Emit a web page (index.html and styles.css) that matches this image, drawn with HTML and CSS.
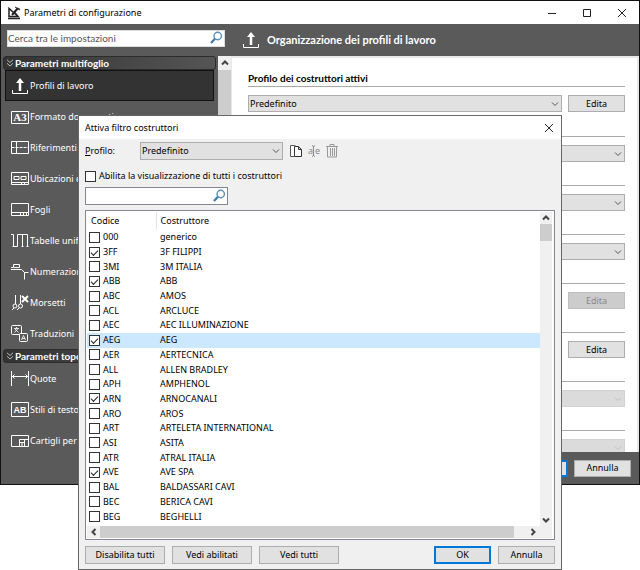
FILE: index.html
```
<!DOCTYPE html>
<html lang="it">

<head>
    <meta charset="utf-8">
    <meta name="viewport" content="width=device-width">
    <title>Parametri di configurazione</title>
    <link rel="stylesheet" href="styles.css">
</head>

<body>
    <svg class="defs" width="0" height="0">
        <symbol id="i-chevron" viewBox="0 0 8 8"><path d="M1 2.5l3 3 3-3" /></symbol>
        <symbol id="i-double" viewBox="0 0 8 8"><path d="M1 .8l3 2.7L7 .8M1 4.3L4 7l3-2.7" /></symbol>
        <symbol id="i-close" viewBox="0 0 10 10"><path d="M1 1l8 8M9 1l-8 8" /></symbol>
        <symbol id="i-lens" viewBox="0 0 14 14"><circle cx="8.7" cy="5" r="3.7" fill="#fff" stroke="#5b8db8" stroke-width="1.4" /><path d="M6 7.7L2 12" stroke="#3f79ad" stroke-width="2.2" /></symbol>
        <symbol id="i-upload" viewBox="0 0 18 18"><path d="M1.5 13v3.5h15V13" /><path d="M9 14V4" stroke-width="2.5" /><path d="M9 1l4 5H5z" fill="#fff" stroke="none" /></symbol>
    </svg>

    <div class="window">
        <div class="titlebar">
            <svg width="14" height="14" viewBox="0 0 14 14" stroke="#222" fill="none"><path d="M2 2.5v8h9zM1 12.5h12" stroke-width="1.5" /><path d="M5 9l6-7" stroke-width="2" /><path d="M8 1l5 3M8 6l3 4M11 3h2" stroke-width="1" /></svg>
            <h1>Parametri di configurazione</h1>
            <button class="win-btn" aria-label="Riduci"><svg width="10" height="10" viewBox="0 0 10 10"><path d="M1 5.5h8" /></svg></button>
            <button class="win-btn" aria-label="Ingrandisci"><svg width="10" height="10" viewBox="0 0 10 10"><path d="M1.5 1.5h7v7h-7z" /></svg></button>
            <button class="win-btn" aria-label="Chiudi"><svg width="10" height="10"><use href="#i-close" /></svg></button>
        </div>

        <div class="toolbar">
            <div class="search main-search">
                <input type="text" placeholder="Cerca tra le impostazioni" aria-label="Cerca tra le impostazioni">
                <svg width="14" height="14"><use href="#i-lens" /></svg>
            </div>
            <svg class="line-icon" width="18" height="18"><use href="#i-upload" /></svg>
            <h2>Organizzazione dei profili di lavoro</h2>
        </div>

        <div class="main">
            <nav class="menu">
                <h3><svg width="8" height="8"><use href="#i-double" /></svg>Parametri multifoglio</h3>
                <a href="#" class="on"><svg class="line-icon" width="18" height="18"><use href="#i-upload" /></svg>Profili di lavoro</a>
                <a href="#"><svg class="line-icon" width="18" height="18" viewBox="0 0 18 18"><path d="M.5 3.5h17v12H.5z" /><text x="9" y="13" class="a3">A3</text></svg>Formato documenti</a>
                <a href="#"><svg class="line-icon" width="18" height="18" viewBox="0 0 18 18"><path d="M.5 2.5h17v12H.5zM5.5 2.5v12" /><path d="M.5 8.5h17" stroke-dasharray="3 1" /></svg>Riferimenti</a>
                <a href="#"><svg class="line-icon" width="18" height="18" viewBox="0 0 18 18"><path d="M.5 2.5h17v12H.5zM3 6.5h5v3H3zM10 6.5h5v3h-5zM.5 12.5h17M10.5 12.5v2M13.5 12.5v2" /></svg>Ubicazioni e fogli</a>
                <a href="#"><svg class="line-icon" width="18" height="18" viewBox="0 0 18 18"><path d="M.5 2.5h17v12H.5zM.5 11.5h17M9.5 11.5v3M12.5 11.5v3M15.5 11.5v3" /></svg>Fogli</a>
                <a href="#"><svg class="line-icon" width="18" height="18" viewBox="0 0 18 18"><path d="M0 2.5h2.5v12M6.5 14.5v-12h10v12M11.5 2.5v12M1.5 14.5h5M10.5 14.5h2M15.5 14.5h2" /></svg>Tabelle unifilari</a>
                <a href="#"><svg class="line-icon" width="18" height="18" viewBox="0 0 18 18"><path d="M2.5 1.5h6v3h-6zM0 6.5h10.5l3 3h4M13.5 9.5v7M0 4.5h2" /></svg>Numerazione</a>
                <a href="#"><svg class="line-icon" width="18" height="18" viewBox="0 0 18 18"><path d="M4.5 1v9M9.5 1v9" /><circle cx="4" cy="12" r="2" /><circle cx="9.5" cy="12" r="2" /><path d="M1 16l2-2M6 16l2-2" /><path d="M11 2l6 6M17 2l-6 6" stroke-width="2" /></svg>Morsetti</a>
                <a href="#"><svg class="line-icon" width="18" height="18" viewBox="0 0 18 18"><rect x=".5" y=".5" width="10" height="9" rx="1" /><rect x="8.5" y="8.5" width="8" height="8" rx="1" fill="#5a5a5a" /><path d="M3 3.5h5M5.5 2v1.5M3.5 7.5l3.5-4M4 4l3.5 3.5M10.5 15l2-4.5 2 4.5M11 13.5h3" stroke-width=".8" /></svg>Traduzioni</a>
                <h3><svg width="8" height="8"><use href="#i-double" /></svg>Parametri topografici</h3>
                <a href="#"><svg class="line-icon" width="18" height="18" viewBox="0 0 18 18"><path d="M.5 1v15M17.5 1v15M1 6.5h16M3.5 4.5l-2 2 2 2M14.5 4.5l2 2-2 2" /></svg>Quote</a>
                <a href="#"><svg class="line-icon" width="18" height="18" viewBox="0 0 18 18"><path d="M.5 1.5h17v14H.5z" /><text x="9" y="12" class="ab">AB</text></svg>Stili di testo</a>
                <a href="#"><svg class="line-icon" width="18" height="18" viewBox="0 0 18 18"><path d="M.5 3.5h17v11H.5zM8.5 14.5v-7h9M8.5 10.5h5M13.5 7.5v7M11 10.5v4" /></svg>Cartigli per topografico</a>
            </nav>
            <div class="menu-scroll">
                <svg width="8" height="8"><use href="#i-chevron" transform="rotate(180 4 4)" /></svg>
                <div class="thumb"></div>
            </div>

            <div class="content">
                <section class="group">
                    <label for="attivi">Profilo dei costruttori attivi</label>
                    <div class="field">
                        <span class="combo"><select id="attivi"><option>Predefinito</option></select><svg width="8" height="8"><use href="#i-chevron" /></svg></span>
                        <button class="btn">Edita</button>
                    </div>
                </section>
                <section class="group">
                    <div class="rule"></div>
                    <div class="field"><span class="combo"><select aria-label="Profilo 2"></select><svg width="8" height="8"><use href="#i-chevron" /></svg></span></div>
                </section>
                <section class="group">
                    <div class="rule"></div>
                    <div class="field"><span class="combo"><select aria-label="Profilo 3"></select><svg width="8" height="8"><use href="#i-chevron" /></svg></span></div>
                </section>
                <section class="group">
                    <div class="rule"></div>
                    <div class="field"><span class="combo"><select aria-label="Profilo 4"></select><svg width="8" height="8"><use href="#i-chevron" /></svg></span></div>
                </section>
                <section class="group">
                    <div class="rule"></div>
                    <div class="field"><span class="combo"><select aria-label="Profilo 5" disabled></select></span><button class="btn" disabled>Edita</button></div>
                </section>
                <section class="group">
                    <div class="rule"></div>
                    <div class="field"><span class="combo"><select aria-label="Profilo 6"></select></span><button class="btn">Edita</button></div>
                </section>
                <section class="group">
                    <div class="rule"></div>
                    <div class="field"><span class="combo"><select aria-label="Profilo 7" disabled></select><svg width="8" height="8"><use href="#i-chevron" /></svg></span></div>
                </section>
                <section class="group">
                    <div class="rule"></div>
                    <div class="field"><span class="combo"><select aria-label="Profilo 8" disabled></select><svg width="8" height="8"><use href="#i-chevron" /></svg></span></div>
                </section>
            </div>
        </div>

        <div class="footer">
            <button class="btn primary">OK</button>
            <button class="btn">Annulla</button>
        </div>
    </div>

    <div class="dialog" role="dialog" aria-labelledby="dlg-title">
        <div class="dialog-title">
            <h2 id="dlg-title">Attiva filtro costruttori</h2>
            <button class="win-btn" aria-label="Chiudi"><svg width="10" height="10"><use href="#i-close" /></svg></button>
        </div>

        <div class="dialog-body">
            <div class="profile">
                <label for="profilo"><u>P</u>rofilo:</label>
                <span class="combo"><select id="profilo"><option>Predefinito</option></select><svg width="8" height="8"><use href="#i-chevron" /></svg></span>
                <button class="tool" aria-label="Copia"><svg width="14" height="14" viewBox="0 0 14 14"><path d="M5.5 12.5h-4v-11h4l2 1" stroke="#555" fill="#fff" /><path d="M5.5 2.5h4l3 3v7h-7zM9.5 2.5v3h3" stroke="#333" fill="#fff" /></svg></button>
                <button class="tool" aria-label="Rinomina"><svg width="14" height="14" viewBox="0 0 14 14"><text x="1" y="10">a</text><text x="8" y="10">e</text><path d="M5 1.5l1.5 1L8 1.5M6.5 2v10M5 12.5l1.5-1 1.5 1" stroke="#888" fill="none" /></svg></button>
                <button class="tool" aria-label="Elimina"><svg width="14" height="14" viewBox="0 0 14 14" stroke="#999" fill="none"><path d="M1 2.5h12M5 2V.5h4V2M2.5 3v10h9V3M5.5 4v8M7.5 4v8M9.5 4v8" /></svg></button>
            </div>

            <label class="check"><input type="checkbox">Abilita la visualizzazione di tutti i costruttori</label>

            <div class="search">
                <input type="text" aria-label="Cerca costruttore">
                <svg width="14" height="14"><use href="#i-lens" /></svg>
            </div>

            <div class="list">
                <table>
                    <thead>
                        <tr><th class="code">Codice</th><th>Costruttore</th></tr>
                    </thead>
                    <tbody>
                        <tr><td><label class="check"><input type="checkbox">000</label></td><td>generico</td></tr>
                        <tr><td><label class="check"><input type="checkbox" checked>3FF</label></td><td>3F FILIPPI</td></tr>
                        <tr><td><label class="check"><input type="checkbox">3MI</label></td><td>3M ITALIA</td></tr>
                        <tr><td><label class="check"><input type="checkbox" checked>ABB</label></td><td>ABB</td></tr>
                        <tr><td><label class="check"><input type="checkbox">ABC</label></td><td>AMOS</td></tr>
                        <tr><td><label class="check"><input type="checkbox">ACL</label></td><td>ARCLUCE</td></tr>
                        <tr><td><label class="check"><input type="checkbox">AEC</label></td><td>AEC ILLUMINAZIONE</td></tr>
                        <tr class="on"><td><label class="check"><input type="checkbox" checked>AEG</label></td><td>AEG</td></tr>
                        <tr><td><label class="check"><input type="checkbox">AER</label></td><td>AERTECNICA</td></tr>
                        <tr><td><label class="check"><input type="checkbox">ALL</label></td><td>ALLEN BRADLEY</td></tr>
                        <tr><td><label class="check"><input type="checkbox">APH</label></td><td>AMPHENOL</td></tr>
                        <tr><td><label class="check"><input type="checkbox" checked>ARN</label></td><td>ARNOCANALI</td></tr>
                        <tr><td><label class="check"><input type="checkbox">ARO</label></td><td>AROS</td></tr>
                        <tr><td><label class="check"><input type="checkbox">ART</label></td><td>ARTELETA INTERNATIONAL</td></tr>
                        <tr><td><label class="check"><input type="checkbox">ASI</label></td><td>ASITA</td></tr>
                        <tr><td><label class="check"><input type="checkbox">ATR</label></td><td>ATRAL ITALIA</td></tr>
                        <tr><td><label class="check"><input type="checkbox" checked>AVE</label></td><td>AVE SPA</td></tr>
                        <tr><td><label class="check"><input type="checkbox">BAL</label></td><td>BALDASSARI CAVI</td></tr>
                        <tr><td><label class="check"><input type="checkbox">BEC</label></td><td>BERICA CAVI</td></tr>
                        <tr><td><label class="check"><input type="checkbox">BEG</label></td><td>BEGHELLI</td></tr>
                    </tbody>
                </table>
                <div class="vscroll">
                    <svg width="8" height="8"><use href="#i-chevron" transform="rotate(180 4 4)" /></svg>
                    <div class="thumb"></div>
                    <svg width="8" height="8"><use href="#i-chevron" /></svg>
                </div>
                <div class="hscroll">
                    <svg width="8" height="8"><use href="#i-chevron" transform="rotate(90 4 4)" /></svg>
                    <div class="thumb"></div>
                    <svg width="8" height="8"><use href="#i-chevron" transform="rotate(-90 4 4)" /></svg>
                </div>
            </div>

            <div class="actions">
                <button class="btn wide">Disabilita tutti</button>
                <button class="btn wide">Vedi abilitati</button>
                <button class="btn wide">Vedi tutti</button>
                <button class="btn primary">OK</button>
                <button class="btn">Annulla</button>
            </div>
        </div>
    </div>
</body>

</html>
```
FILE: styles.css
```
* {
    box-sizing: border-box;
}

body {
    margin: 0;
    background: #fff;
    font: 9px/14px "Noto Sans", sans-serif;
    color: #000;
}

h1,
h2,
h3 {
    margin: 0;
    font-size: inherit;
}

svg {
    display: block;
    flex: none;
}

.defs {
    position: absolute;
}

button,
input,
select {
    margin: 0;
    font: inherit;
    color: inherit;
}

/* main window */

.window {
    border: 1px solid #111;
}

.titlebar {
    display: flex;
    align-items: center;
    height: 23px;
    padding: 0 12px 0 6px;
    background: #fff;
}

.titlebar h1 {
    flex: 1;
    margin-left: 3px;
    font-weight: normal;
}

.win-btn {
    padding: 0;
    margin-left: 25px;
    border: 0;
    background: none;
}

.win-btn svg {
    fill: none;
    stroke: #222;
}

.toolbar {
    display: flex;
    align-items: center;
    height: 32px;
    padding-left: 6px;
    background: #5a5a5a;
    color: #fff;
}

.toolbar h2 {
    font-family: Lato, sans-serif;
    font-size: 11px;
}

.search {
    display: flex;
    align-items: center;
    width: 143px;
    height: 18px;
    padding-right: 1px;
    border: 1px solid #828790;
    background: #fff;
}

.search input {
    flex: 1;
    min-width: 0;
    padding: 0;
    border: 0;
    outline: 0;
    color: #333;
}

.search input::placeholder {
    color: #555;
}

.main-search {
    width: 218px;
    height: 17px;
    margin-bottom: 4px;
    border-color: #ddd;
    font-family: Lato, sans-serif;
    font-size: 10px;
}

.main-search + svg {
    margin: 0 7px 0 17px;
}

.line-icon {
    fill: none;
    stroke: #fff;
    stroke-width: 1;
}

.line-icon text {
    fill: #fff;
    stroke: none;
    text-anchor: middle;
    font: bold 11px "Liberation Serif", serif;
}

.line-icon .ab {
    font: bold 9px "Liberation Sans", sans-serif;
}

.main {
    display: flex;
    height: 396px;
    background: #5a5a5a;
}

.menu {
    width: 217px;
    padding: 0 2px;
    color: #fff;
}

.menu h3 {
    display: flex;
    align-items: center;
    gap: 1px;
    height: 14px;
    padding-left: 2px;
    border: 1px solid #2c2c2c;
    border-radius: 3px;
    background: linear-gradient(to right, #333, #555);
    font-family: Lato, sans-serif;
    font-size: 10px;
}

.menu h3 svg {
    fill: none;
    stroke: #bbb;
}

.menu a {
    display: flex;
    align-items: center;
    gap: 1px;
    height: 31px;
    margin: 0 2px;
    padding-left: 5px;
    border: 1px solid transparent;
    color: #fff;
    text-decoration: none;
    white-space: nowrap;
}

.menu .on {
    border-color: #111;
    background: #333;
}

.menu-scroll {
    display: flex;
    flex-direction: column;
    align-items: center;
    width: 13px;
    padding-top: 3px;
    background: #f0f0f0;
}

.menu-scroll svg,
.vscroll svg,
.hscroll svg {
    fill: none;
    stroke: #444;
    stroke-width: 2;
}

.thumb {
    background: #cdcdcd;
}

.menu-scroll .thumb {
    flex: 1;
    width: 100%;
    margin-top: 3px;
}

.content {
    flex: 1;
    padding: 13px 12px 0 16px;
    border: 2px solid #e8e8e8;
    border-width: 2px 2px 0 1px;
    background: #fff;
    overflow: hidden;
}

.group {
    height: 49px;
}

.group:first-child {
    height: 50px;
}

.group label,
.rule {
    display: block;
    height: 16px;
    border-bottom: 1px solid #aaa;
    font-family: Lato, sans-serif;
    font-size: 10px;
    font-weight: bold;
}

.field {
    display: flex;
    gap: 6px;
    padding-top: 8px;
}

.combo {
    flex: 1;
    display: grid;
    align-items: center;
}

.combo select {
    grid-area: 1 / 1;
    width: 100%;
    height: 17px;
    padding: 0 0 0 1px;
    appearance: none;
    border: 1px solid #adadad;
    border-radius: 0;
    background: #e1e1e1;
}

.combo svg {
    grid-area: 1 / 1;
    justify-self: end;
    margin-right: 3px;
    fill: none;
    stroke: #555;
    pointer-events: none;
}

.combo select:disabled {
    border-color: #bfbfbf;
    background: #ccc;
}

.combo select:disabled + svg {
    stroke: #aaa;
}

.btn {
    width: 57px;
    height: 17px;
    padding: 0;
    border: 1px solid #adadad;
    background: #e1e1e1;
    line-height: 14px;
    white-space: nowrap;
}

.btn:disabled {
    border-color: #bfbfbf;
    background: #ccc;
    color: #888;
}

.btn.primary {
    border: 2px solid #0078d7;
}

.footer {
    display: flex;
    justify-content: flex-end;
    align-items: center;
    gap: 6px;
    height: 32px;
    padding-right: 8px;
    background: #5a5a5a;
}

/* filter dialog */

.dialog {
    position: absolute;
    top: 115px;
    left: 78px;
    right: 78px;
    border: 1px solid #666;
    background: #f0f0f0;
}

.dialog-title {
    display: flex;
    align-items: center;
    height: 23px;
    padding: 0 7px 0 6px;
    background: #fff;
}

.dialog-title h2 {
    flex: 1;
    font-weight: normal;
}

.dialog-body {
    padding: 3px 6px 5px;
}

.profile {
    display: flex;
    align-items: center;
}

.profile label {
    width: 55px;
}

.profile .combo {
    flex: none;
    width: 143px;
    margin-right: 2px;
}

.profile select {
    height: 18px;
}

.tool {
    padding: 0;
    margin-left: 4px;
    border: 0;
    background: none;
}

.tool text {
    fill: #888;
    font-size: 9px;
}

.check {
    display: flex;
    align-items: center;
    gap: 3px;
}

.check input {
    appearance: none;
    flex: none;
    width: 11px;
    height: 11px;
    border: 1px solid #333;
    background: #fff;
}

.check input:checked::after {
    content: "";
    display: block;
    width: 6px;
    height: 3px;
    margin: 2px 1px;
    border: solid #222;
    border-width: 0 0 1px 1px;
    transform: rotate(-45deg);
}

.dialog-body > .check {
    margin: 9px 0 4px;
}

.list {
    display: grid;
    grid-template-columns: 1fr 12px;
    grid-template-rows: 314px 12px;
    margin: 5px 0 6px;
    padding: 1px 2px 1px 1px;
    border: 1px solid #828790;
    background: #fff;
}

table {
    width: 100%;
    height: 312px;
    border-collapse: collapse;
    table-layout: fixed;
}

th,
td {
    padding: 0 0 0 4px;
    line-height: 14px;
    font-weight: normal;
    text-align: left;
}

th {
    height: 18px;
}

.code {
    width: 69px;
    border-right: 1px solid #e5e5e5;
}

td:first-child {
    padding-left: 2px;
}

tbody .on {
    background: #cce8ff;
}

.vscroll {
    display: flex;
    flex-direction: column;
    align-items: center;
    padding: 2px 0;
    background: #f0f0f0;
}

.vscroll .thumb {
    width: 100%;
    height: 17px;
    margin: 2px 0 auto;
}

.hscroll {
    grid-column: 1 / 3;
    display: flex;
    align-items: center;
    padding: 0 15px 0 3px;
    background: #f0f0f0;
}

.hscroll .thumb {
    flex: 1;
    height: 100%;
    margin: 0 15px 0 2px;
}

.actions {
    display: flex;
    gap: 7px;
}

.actions .btn {
    height: 18px;
}

.actions .wide {
    width: 80px;
}

.actions .primary {
    margin-left: auto;
}
```
